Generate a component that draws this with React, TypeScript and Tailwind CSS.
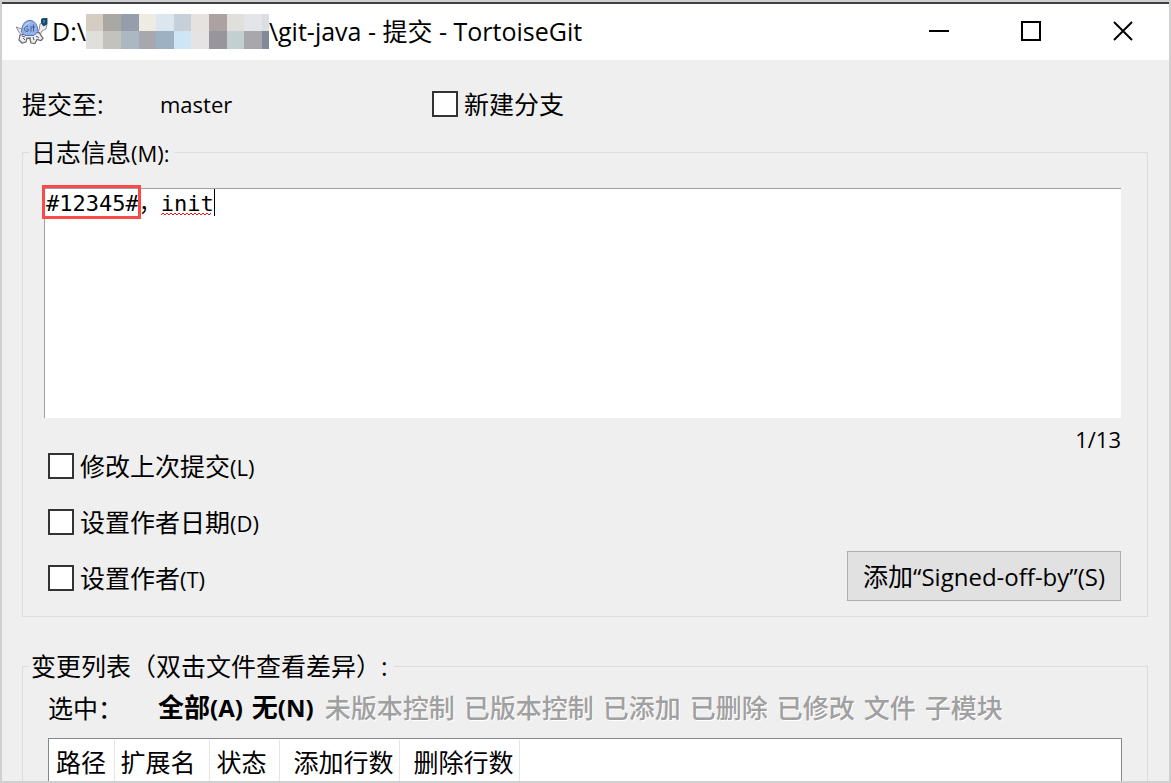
import { useState } from "react";
import type { ReactNode } from "react";

const MOSAIC = [
  ["bg-[#d5ccc2]", "bg-[#a9a8a2]", "bg-[#969dab]", "bg-[#eeeae4]", "bg-[#dce6ee]", "bg-[#c7cfd8]", "bg-[#e5e2e0]", "bg-[#aca2a1]", "bg-[#e0dfdb]", "bg-[#e3e5e8]", "bg-[#dbdfe3]"],
  ["bg-[#e1dfdb]", "bg-[#c3c2bd]", "bg-[#abb7c1]", "bg-[#a6a8ad]", "bg-[#9db1c3]", "bg-[#cde5f4]", "bg-[#e6e3e4]", "bg-[#98969c]", "bg-[#c3cfd0]", "bg-[#a8a8ac]", "bg-[#818a96]"],
];

const FILTERS = ["未版本控制", "已版本控制", "已添加", "已删除", "已修改", "文件", "子模块"];

function TurtleIcon() {
  return (
    <svg width="32" height="26" viewBox="0 0 32 26" fill="none" aria-hidden="true">
      <path d="M0 9l6 2 3 5-2 3-4-5z" fill="#e6e6ea" stroke="#77777f" strokeWidth=".8" />
      <path d="M20 15l3-3 1-6 4-2 3 2-1 5-4 2-3 6-4 1z" fill="#ececf0" stroke="#77777f" strokeWidth=".8" />
      <path d="M4 17l-1 5 3 3 4-1 1-4 3 1 1 4 4 .5 2-4 4 1 2-2-4-6z" fill="#eeeef2" stroke="#66666f" strokeWidth="1.200" />
      <path d="M5.500 14C6 6 9 2.500 14 2.500S21.500 7 22 13.500l-4 4H9z" fill="#91b2ec" stroke="#5d74a8" strokeWidth="1" />
      <path d="M8 10c1-3 3-5 6-5.500" stroke="#c6d9fa" strokeWidth="1.200" />
      <path d="M12 8.500c-4-1.500-5 5-1 5 1.500 0 1.500-2 1-2.500h-1.500M15 8v5.500M17.500 6.500v7M16 9h3" stroke="#4a5d90" strokeWidth="1" />
      <path d="M25.500 1l5.500-1v6l-3.500 2-2-3z" fill="#174e70" stroke="#103850" strokeWidth=".8" />
      <path d="M28 2v3" stroke="#3f9fc0" strokeWidth="1.200" />
      <path d="M7 20l2 2M17 19l1 3M12 20h3M6 18l3 1M20 18l3 2" stroke="#55555e" strokeWidth="1" />
    </svg>
  );
}

function Check({ children }: { children: ReactNode }) {
  return (
    <label className="flex h-[34px] items-center gap-[6px]">
      <input type="checkbox" className="size-[26px] appearance-none border-2 border-[#333] bg-white checked:bg-[#333]" />
      <span className="whitespace-nowrap">{children}</span>
    </label>
  );
}

function Key({ children }: { children: string }) {
  return <span className="text-[22px]">{children}</span>;
}

export default function App() {
  const [message, setMessage] = useState("#12345#，init");
  return (
    <div className="flex h-screen flex-col overflow-hidden border-2 border-[#d0d0d0] bg-[#efefef] font-['Open_Sans','Noto_Sans_CJK_SC',sans-serif] text-[25px] leading-[34px] text-black">
      <header className="flex h-[58px] shrink-0 items-center border-t-2 border-[#3f4044] bg-white pb-[2px] pl-[14px]">
        <TurtleIcon />
        <h1 className="ml-1 flex items-center whitespace-pre">
          <span>D:\</span>
          <span className="grid h-[35px] w-[183px] grid-cols-[repeat(10,5fr)_2fr] grid-rows-2" aria-hidden="true">
            {MOSAIC.flat().map((color, i) => (
              <span key={i} className={color} />
            ))}
          </span>
          <span>\git-java - 提交 - TortoiseGit</span>
        </h1>
        <div className="ml-auto flex self-stretch">
          <button aria-label="最小化" className="flex w-[92px] items-center justify-center">
            <svg width="20" height="20" viewBox="0 0 20 20" stroke="#000" strokeWidth="2"><path d="M0 10h20" /></svg>
          </button>
          <button aria-label="最大化" className="flex w-[92px] items-center justify-center">
            <svg width="20" height="20" viewBox="0 0 20 20" fill="none" stroke="#000" strokeWidth="2"><path d="M1 1h18v18H1z" /></svg>
          </button>
          <button aria-label="关闭" className="flex w-[92px] items-center justify-center">
            <svg width="20" height="20" viewBox="0 0 20 20" stroke="#000" strokeWidth="2"><path d="M1 1l18 18M19 1L1 19" /></svg>
          </button>
        </div>
      </header>

      <main className="flex min-h-0 flex-1 flex-col pl-5 pr-[21px] pt-[27px]">
        <div className="flex items-center">
          <span className="w-[138px]">提交至:</span>
          <span className="w-[272px] text-[22px]">master</span>
          <Check>新建分支</Check>
        </div>

        <fieldset className="mt-[14px] border border-[#dcdcdc] pb-[15px] pl-[6px] pr-[26px]">
          <legend className="pl-[2px] pr-1">
            <label htmlFor="message">日志信息<Key>(M):</Key></label>
          </legend>
          <div className="pl-[15px]">
            <div className="relative mt-[18px]">
              <textarea
                id="message"
                spellCheck={false}
                value={message}
                onChange={(e) => setMessage(e.target.value)}
                className="block h-[230px] w-full resize-none border-l border-t border-[#a0a0a0] bg-white pl-px font-['DejaVu_Sans_Mono','Noto_Sans_CJK_SC',monospace] text-[22px] leading-[30px] outline-none"
              />
              <span className="pointer-events-none absolute -left-[2px] -top-[3px] h-[34px] w-[99px] border-[3px] border-[#fa4949]" />
              <svg className="pointer-events-none absolute left-[117px] top-[24px]" width="52" height="4" viewBox="0 0 52 4" fill="none" stroke="#e8141c" aria-hidden="true">
                <path d="M0 3l2-2 2 2 2-2 2 2 2-2 2 2 2-2 2 2 2-2 2 2 2-2 2 2 2-2 2 2 2-2 2 2 2-2 2 2 2-2 2 2 2-2 2 2 2-2 2 2 2-2" />
              </svg>
              <span className="pointer-events-none absolute left-[170px] top-px h-[27px] w-px bg-black" />
            </div>
            <div className="mt-[6px] flex justify-between">
              <div className="flex flex-col gap-[22px] pb-[6px] pl-1 pt-[25px]">
                <Check>修改上次提交<Key>(L)</Key></Check>
                <Check>设置作者日期<Key>(D)</Key></Check>
                <Check>设置作者<Key>(T)</Key></Check>
              </div>
              <div className="flex flex-col items-end justify-between">
                <span className="text-[22px] leading-[30px]">1/13</span>
                <button className="h-[50px] whitespace-nowrap border border-[#adadad] bg-[#e1e1e1] px-[15px]">
                  添加<span className="text-[24px]">“Signed-off-by”(S)</span>
                </button>
              </div>
            </div>
          </div>
        </fieldset>

        <fieldset className="mt-8 flex min-h-0 flex-1 flex-col border border-b-0 border-[#dcdcdc] pl-[6px] pr-[25px]">
          <legend className="pl-[2px] pr-[6px]">变更列表（双击文件查看差异）:</legend>
          <div className="mt-[7px] flex items-center pl-[19px]">
            <span className="w-[110px]">选中：</span>
            <div className="flex gap-[11px] whitespace-nowrap text-[26px] font-bold">
              <div className="flex gap-[9px]">
                <button>全部<span className="text-[24px]">(A)</span></button>
                <button>无<span className="text-[24px]">(N)</span></button>
              </div>
              <div className="flex gap-[9px]">
                {FILTERS.map((name) => (
                  <button key={name} disabled className="font-medium text-[#a0a0a0] [text-shadow:1px_1px_0_#fff]">{name}</button>
                ))}
              </div>
            </div>
          </div>
          <div className="ml-[19px] mt-[13px] min-h-0 flex-1 overflow-hidden border border-b-0 border-[#828790] bg-white pt-px">
            <table className="table-fixed border-collapse text-left whitespace-nowrap">
              <thead>
                <tr className="h-[44px] *:border-r *:border-[#e5e5e5] *:font-normal">
                  <th scope="col" className="w-[65px] pl-[7px]">路径</th>
                  <th scope="col" className="w-[95px] pl-[6px]">扩展名</th>
                  <th scope="col" className="w-[70px] pl-[7px]">状态</th>
                  <th scope="col" className="w-[120px] pr-[5px] text-right">添加行数</th>
                  <th scope="col" className="w-[120px] pr-[5px] text-right">删除行数</th>
                </tr>
              </thead>
            </table>
          </div>
        </fieldset>
      </main>
    </div>
  );
}
